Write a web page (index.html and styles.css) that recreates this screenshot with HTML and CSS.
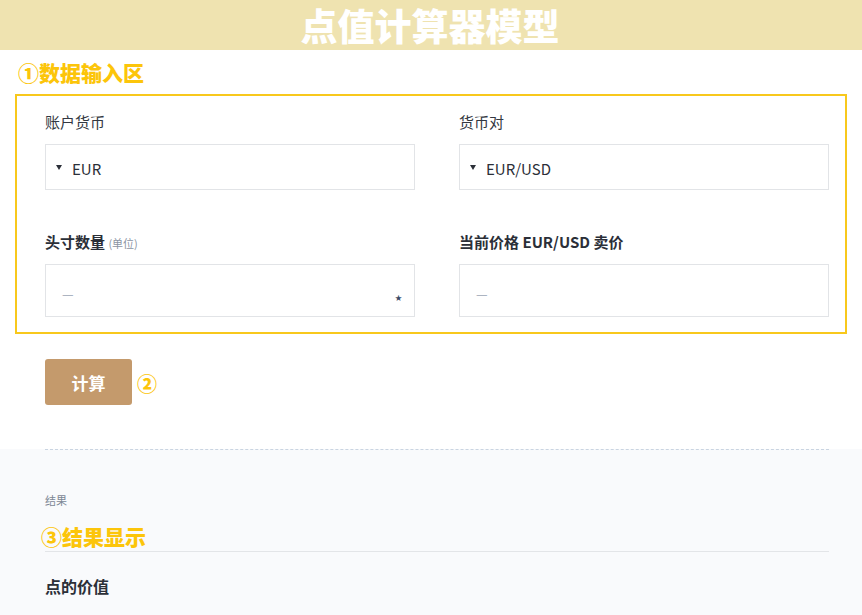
FILE: index.html
```html
<!DOCTYPE html>
<html lang="zh">
<head>
    <meta charset="UTF-8">
    <title>点值计算器模型</title>
    <link rel="stylesheet" href="styles.css">
</head>
<body>

    <header class="banner"><h1>点值计算器模型</h1></header>

    <div class="note note-input">①数据输入区</div>

    <section class="input-box">
        <div class="form-grid">
            <div class="field">
                <label class="field-label">账户货币</label>
                <div class="select"><span class="caret"></span>EUR</div>
            </div>
            <div class="field">
                <label class="field-label">货币对</label>
                <div class="select"><span class="caret"></span>EUR/USD</div>
            </div>
            <div class="field field-strong">
                <label class="field-label strong">头寸数量 <small>(单位)</small></label>
                <div class="text-input"><span class="dash">—</span><span class="star">★</span></div>
            </div>
            <div class="field field-strong">
                <label class="field-label strong">当前价格 EUR/USD 卖价</label>
                <div class="text-input"><span class="dash">—</span></div>
            </div>
        </div>
    </section>

    <div class="actions">
        <button class="calc-btn" type="button">计算</button>
        <span class="note note-step">②</span>
    </div>

    <section class="results">
        <div class="results-inner">
            <div class="results-caption">结果</div>
            <div class="results-head"><span class="note note-result">③结果显示</span></div>
            <div class="results-row">点的价值</div>
        </div>
    </section>

</body>
</html>
```

FILE: styles.css
```css
* {
    box-sizing: border-box;
}

body {
    margin: 0;
    font-family: "Noto Sans CJK SC", "Noto Sans", sans-serif;
    color: #2b2f38;
    background: #fff;
    height: 615px;
    overflow: hidden;
}

.banner {
    height: 50px;
    background: #efe3b0;
    display: flex;
    justify-content: center;
    align-items: center;
}

.banner h1 {
    margin: 0;
    padding-right: 2px;
    color: #fff;
    font-size: 37px;
    line-height: 40px;
    font-weight: 900;
}

.note {
    color: #fcc50a;
    font-weight: 900;
}

.note-input {
    height: 44px;
    line-height: 44px;
    padding-left: 18px;
    font-size: 21px;
}

.input-box {
    margin: 0 15px;
    border: 2px solid #f8c81c;
    padding: 16px 16px 15px 28px;
}

.form-grid {
    display: grid;
    grid-template-columns: 370px 370px;
    column-gap: 44px;
    row-gap: 42px;
}

.field-label {
    display: block;
    height: 20px;
    line-height: 20px;
    font-size: 15px;
    color: #333842;
    margin-bottom: 12px;
}

.field-label.strong {
    font-weight: bold;
    color: #2b2f38;
}

.field-label small {
    font-size: 11px;
    font-weight: normal;
    color: #8b94a3;
}

.select {
    height: 46px;
    border: 1px solid #e2e4e7;
    display: flex;
    align-items: center;
    padding: 3px 0 0 10px;
    font-size: 15px;
    color: #2b2f38;
}

.caret {
    width: 0;
    height: 0;
    border-left: 3.5px solid transparent;
    border-right: 3.5px solid transparent;
    border-top: 5px solid #2b2f38;
    margin-right: 10px;
    margin-top: -3px;
}

.text-input {
    height: 53px;
    border: 1px solid #e2e4e7;
    display: flex;
    align-items: center;
    justify-content: space-between;
    padding: 6px 12px 0 16px;
}

.dash {
    color: #9aa3b3;
    font-size: 13px;
}

.star {
    font-size: 7px;
    color: #3b4a66;
    margin-top: 6px;
}

.actions {
    display: flex;
    align-items: center;
    padding: 25px 0 44px 45px;
}

.calc-btn {
    width: 87px;
    height: 46px;
    border: none;
    border-radius: 3px;
    background: #c49a6c;
    color: #fff;
    font-family: inherit;
    font-size: 17px;
    font-weight: bold;
}

.note-step {
    font-size: 20px;
    margin-left: 5px;
    margin-top: 2px;
}

.results {
    background: #f9fafc;
    padding: 0 33px 0 45px;
    height: 166px;
}

.results-inner {
    border-top: 1px dashed #c9d4e1;
    padding-top: 42px;
}

.results-caption {
    font-size: 11px;
    line-height: 16px;
    color: #7d8795;
}

.results-head {
    margin-top: 14px;
    border-bottom: 1px solid #e3e5e8;
    height: 30px;
}

.note-result {
    display: block;
    margin-left: -4px;
    font-size: 21px;
    line-height: 28px;
}

.results-row {
    margin-top: 22px;
    font-size: 16px;
    line-height: 24px;
    font-weight: bold;
    color: #2b2f38;
}
```
